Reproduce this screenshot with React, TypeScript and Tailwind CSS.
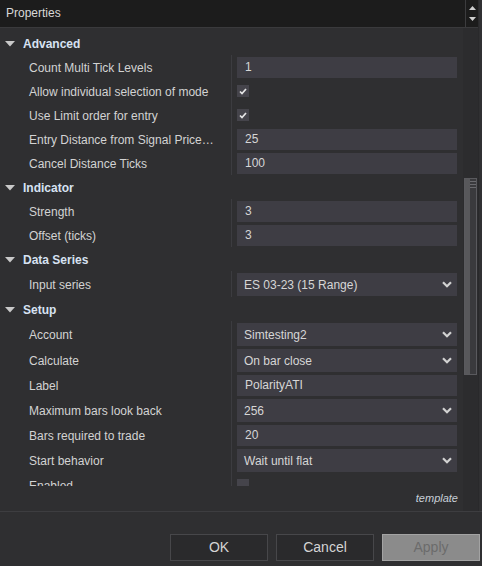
import React from 'react';

type Row =
  | { kind: 'text'; label: string; value: string }
  | { kind: 'check'; label: string; checked: boolean }
  | { kind: 'combo'; label: string; value: string };

interface Group {
  name: string;
  rows: Row[];
}

const groups: Group[] = [
  {
    name: 'Advanced',
    rows: [
      { kind: 'text', label: 'Count Multi Tick Levels', value: '1' },
      { kind: 'check', label: 'Allow individual selection of mode', checked: true },
      { kind: 'check', label: 'Use Limit order for entry', checked: true },
      { kind: 'text', label: 'Entry Distance from Signal Price…', value: '25' },
      { kind: 'text', label: 'Cancel Distance Ticks', value: '100' },
    ],
  },
  {
    name: 'Indicator',
    rows: [
      { kind: 'text', label: 'Strength', value: '3' },
      { kind: 'text', label: 'Offset (ticks)', value: '3' },
    ],
  },
  {
    name: 'Data Series',
    rows: [{ kind: 'combo', label: 'Input series', value: 'ES 03-23 (15 Range)' }],
  },
  {
    name: 'Setup',
    rows: [
      { kind: 'combo', label: 'Account', value: 'Simtesting2' },
      { kind: 'combo', label: 'Calculate', value: 'On bar close' },
      { kind: 'text', label: 'Label', value: 'PolarityATI' },
      { kind: 'combo', label: 'Maximum bars look back', value: '256' },
      { kind: 'text', label: 'Bars required to trade', value: '20' },
      { kind: 'combo', label: 'Start behavior', value: 'Wait until flat' },
      { kind: 'check', label: 'Enabled', checked: false },
    ],
  },
];

const Caret = () => (
  <svg width="10" height="6" viewBox="0 0 10 6" className="shrink-0">
    <path d="M0 0 L10 0 L5 5.5 Z" fill="#c9c9c9" />
  </svg>
);

const Chevron = () => (
  <svg width="10" height="7" viewBox="0 0 10 7" className="shrink-0">
    <polyline points="1,1.2 5,5.2 9,1.2" fill="none" stroke="#d2d2d2" strokeWidth="2.2" />
  </svg>
);

const Check = () => (
  <svg width="8" height="7" viewBox="0 0 8 7">
    <polyline points="1,3.5 3,5.5 7,1" fill="none" stroke="#e6e6e6" strokeWidth="1.7" />
  </svg>
);

const PropRow: React.FC<{ row: Row }> = ({ row }) => {
  const tall = row.kind === 'combo';
  return (
    <div className={`flex ${tall ? 'h-[26px]' : 'h-[24px]'}`}>
      <div
        className={`w-[231px] pl-[29px] ${tall ? 'pt-[7px]' : 'pt-[6px]'} text-[12px] leading-[14px] text-[#d3d3d3] whitespace-nowrap overflow-hidden`}
      >
        {row.label}
      </div>
      <div className="flex-1 border-l border-[#3c3c40] pl-[5px] pr-[6px] pt-[2px]">
        {row.kind === 'text' && (
          <div className="h-[21px] bg-[#3e3d44] pl-[8px] text-[12px] leading-[21px] text-[#d6d6d6]">
            {row.value}
          </div>
        )}
        {row.kind === 'combo' && (
          <div className="h-[23px] bg-[#3e3d44] pl-[7px] pr-[5px] flex items-center justify-between text-[12px] text-[#d6d6d6]">
            <span>{row.value}</span>
            <Chevron />
          </div>
        )}
        {row.kind === 'check' && (
          <div className="pt-[4px]">
            <div className="w-[12px] h-[12px] bg-[#45444b] flex items-center justify-center">
              {row.checked && <Check />}
            </div>
          </div>
        )}
      </div>
    </div>
  );
};

export default function App() {
  return (
    <div
      className="w-[482px] h-[566px] bg-[#2f2f31] flex flex-col overflow-hidden"
      style={{ fontFamily: '"Liberation Sans", Arial, sans-serif' }}
    >
      <div className="h-[512px] flex border-b border-[#3d3d40]">
        <div className="w-[478px] flex flex-col">
          <div className="h-[28px] flex bg-[#1c1c1c] border-b border-[#3a3a3c]">
            <div className="flex-1 pl-[6px] pt-[6px] text-[12px] leading-[14px] text-[#d8d8d8]">
              Properties
            </div>
            <div className="w-[13px] border-l border-[#3c3c3e] flex flex-col items-center justify-center gap-[7px]">
              <svg width="7" height="4" viewBox="0 0 7 4">
                <path d="M0 4 L7 4 L3.5 0 Z" fill="#cfcfcf" />
              </svg>
              <svg width="7" height="4" viewBox="0 0 7 4">
                <path d="M0 0 L7 0 L3.5 4 Z" fill="#cfcfcf" />
              </svg>
            </div>
          </div>
          <div className="flex-1 flex">
            <div className="w-[463px] flex flex-col">
              <div className="h-[458px] overflow-hidden pt-[3px]">
                {groups.map(g => (
                  <div key={g.name}>
                    <div className="h-[24px] flex items-center gap-[8px] pl-[5px] pt-[2px]">
                      <Caret />
                      <span className="text-[12px] font-bold text-[#d7e2f2]">{g.name}</span>
                    </div>
                    {g.rows.map(r => (
                      <PropRow key={r.label} row={r} />
                    ))}
                  </div>
                ))}
              </div>
              <div className="flex-1 flex justify-end items-center pr-[5px]">
                <span className="text-[11px] italic text-[#c8cfd8]">template</span>
              </div>
            </div>
            <div className="w-[15px] bg-[#2c2c2e] pt-[150px]">
              <div className="h-[197px] mx-[1px] border border-[#5a5a5e] bg-[#3a3a3d] flex">
                <div className="w-[6px] bg-[#58585b]" />
                <div className="flex-1 pt-[2px] flex flex-col gap-[2px] items-center">
                  <div className="w-[6px] h-px bg-[#6a6a6e]" />
                  <div className="w-[6px] h-px bg-[#6a6a6e]" />
                  <div className="w-[6px] h-px bg-[#6a6a6e]" />
                </div>
              </div>
            </div>
          </div>
        </div>
        <div className="flex-1 bg-[#303032] border-l border-[#29292b]" />
      </div>
      <div className="flex-1 flex justify-end items-start pt-[22px] pr-[2px] gap-[8px]">
        <button className="w-[98px] h-[27px] bg-[#2a2a2c] border border-[#47474a] text-[14px] text-[#d4d4d4]">
          OK
        </button>
        <button className="w-[98px] h-[27px] bg-[#2a2a2c] border border-[#47474a] text-[14px] text-[#d4d4d4]">
          Cancel
        </button>
        <button className="w-[98px] h-[27px] bg-[#8b8b8b] border border-[#a3a3a3] text-[14px] text-[#6b6b6b]">
          Apply
        </button>
      </div>
    </div>
  );
}
